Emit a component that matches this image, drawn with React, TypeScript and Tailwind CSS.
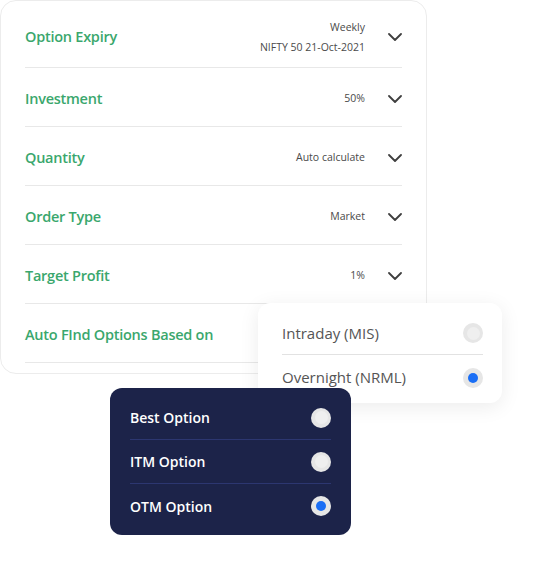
const rows = [
  { label: "Investment", value: "50%" },
  { label: "Quantity", value: "Auto calculate" },
  { label: "Order Type", value: "Market" },
  { label: "Target Profit", value: "1%" },
];

function Chevron() {
  return (
    <svg width="14" height="8" viewBox="0 0 14 8" fill="none" className="ml-[23px] shrink-0">
      <path d="M1 1l6 6 6-6" stroke="#3f3f3f" strokeWidth="1.8" strokeLinecap="round" strokeLinejoin="round" />
    </svg>
  );
}

function Radio({ checked }: { checked?: boolean }) {
  return (
    <span className="flex h-[20px] w-[20px] items-center justify-center rounded-full bg-[#e6e6e6]">
      <span className={checked ? "h-[10px] w-[10px] rounded-full bg-[#1a6ef5]" : "h-[13px] w-[13px] rounded-full bg-[#efefef]"} />
    </span>
  );
}

export default function App() {
  return (
    <div className="relative h-[570px] w-[533px] bg-white font-['Open_Sans',sans-serif]">
      <div className="w-[427px] rounded-[16px] border border-[#ececec] bg-white px-[24px] pb-[10px]">
        <div className="flex h-[67px] items-center border-b border-[#e8e8e8] pt-[5px]">
          <span className="flex-1 text-[14.5px] font-semibold tracking-[-0.25px] text-[#3aa76d]">Option Expiry</span>
          <div className="flex flex-col items-end gap-[6px] text-[10.5px] leading-[14px] text-[#4a4a4a]">
            <span>Weekly</span>
            <span>NIFTY 50 21-Oct-2021</span>
          </div>
          <Chevron />
        </div>
        {rows.map((r) => (
          <div key={r.label} className="flex h-[59px] items-center border-b border-[#e8e8e8] pt-[3px]">
            <span className="flex-1 text-[14.5px] font-semibold tracking-[-0.25px] text-[#3aa76d]">{r.label}</span>
            <span className="text-[10.5px] text-[#4a4a4a]">{r.value}</span>
            <Chevron />
          </div>
        ))}
        <div className="flex h-[59px] items-center border-b border-[#e8e8e8] pt-[3px]">
          <span className="text-[14.5px] font-semibold tracking-[-0.25px] text-[#3aa76d]">Auto FInd Options Based on</span>
        </div>
      </div>

      <div className="absolute left-[258px] top-[303px] w-[244px] rounded-[12px] bg-white pl-[24px] pr-[19px] shadow-[0_4px_20px_rgba(0,0,0,0.08)]">
        <div className="flex h-[52px] items-center justify-between border-b border-[#e2e2e2] pt-[9px]">
          <span className="text-[15px] text-[#555]">Intraday (MIS)</span>
          <Radio />
        </div>
        <div className="flex h-[48px] items-center justify-between pb-[3px]">
          <span className="text-[15px] text-[#555]">Overnight (NRML)</span>
          <Radio checked />
        </div>
      </div>

      <div className="absolute left-[110px] top-[388px] w-[241px] rounded-[12px] bg-[#1c2349] px-[20px] pt-[8px] pb-[7px]">
        {["Best Option", "ITM Option", "OTM Option"].map((t, i) => (
          <div key={t} className={`flex h-[44px] items-center justify-between ${i < 2 ? "border-b border-[#2c3670]" : ""}`}>
            <span className="text-[14px] font-semibold text-white">{t}</span>
            <Radio checked={i === 2} />
          </div>
        ))}
      </div>
    </div>
  );
}
